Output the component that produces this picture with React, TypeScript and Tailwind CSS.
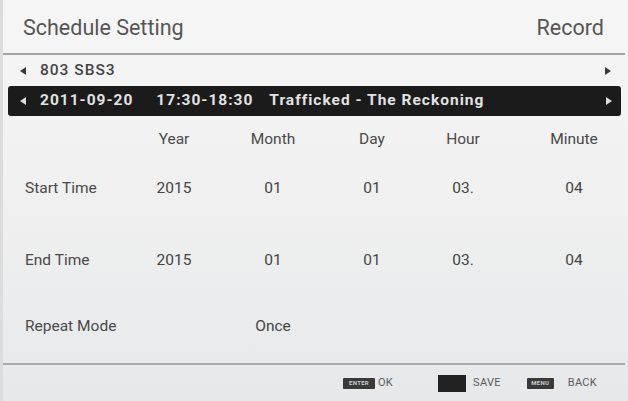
import React from 'react'

// ─── Small pieces ─────────────────────────────────────────────────────────────

function TriLeft({ className = '' }: { className?: string }) {
  return (
    <svg width="6" height="8" viewBox="0 0 6 8" className={className}>
      <path d="M6 0 L0 4 L6 8 Z" fill="currentColor" />
    </svg>
  )
}

function TriRight({ className = '' }: { className?: string }) {
  return (
    <svg width="6" height="8" viewBox="0 0 6 8" className={className}>
      <path d="M0 0 L6 4 L0 8 Z" fill="currentColor" />
    </svg>
  )
}

const cols = ['Year', 'Month', 'Day', 'Hour', 'Minute']

const gridCls = 'grid grid-cols-[104px_90px_108px_90px_92px_110px] pl-[22px] items-center'

function ValueRow({ label, values, h }: { label: string; values: string[]; h: string }) {
  return (
    <div className={`${gridCls} ${h}`}>
      <span className="text-[15.5px] text-[#4a4a4a]">{label}</span>
      {values.map((v, i) => (
        <span
          key={i}
          className={`text-center text-[15.5px] text-[#444] ${i === 4 ? 'pl-[20px]' : ''}`}
        >
          {v}
        </span>
      ))}
    </div>
  )
}

// ─── Page ─────────────────────────────────────────────────────────────────────

export default function App() {
  return (
    <div
      className="w-[628px] h-[401px] overflow-hidden flex flex-col bg-gradient-to-b from-[#f6f6f6] via-[#f0f0f0] to-[#e6e8ea] border-l-[3px] border-[#dcdcdc]"
      style={{ fontFamily: 'Roboto, "Noto Sans", sans-serif' }}
    >
      {/* Header */}
      <div className="h-[53px] flex items-center justify-between pl-[20px] pr-[24px] pt-[3px]">
        <span className="text-[21.5px] text-[#555]">Schedule Setting</span>
        <span className="text-[21.5px] text-[#555]">Record</span>
      </div>
      <div className="h-[2px] mr-[3px] bg-[#a3a3a3]" />

      {/* Channel */}
      <div className="h-[31px] flex items-center pl-[17px] pr-[17px] text-[#3a3a3a]">
        <TriLeft />
        <span className="ml-[14px] text-[15.5px] font-medium tracking-[1px] text-[#444]">803 SBS3</span>
        <TriRight className="ml-auto" />
      </div>

      {/* Selected programme */}
      <div className="h-[30px] ml-[5px] mr-[7px] rounded-[3px] bg-[#1b1b1b] flex items-center pl-[12px] pr-[9px] text-[#e2e2e2]">
        <TriLeft className="text-[#ddd]" />
        <div className="ml-[14px] flex items-center text-[15.5px] font-bold tracking-[1px]">
          <span>2011-09-20</span>
          <span className="ml-[23px]">17:30-18:30</span>
          <span className="ml-[16px]">Trafficked - The Reckoning</span>
        </div>
        <TriRight className="ml-auto text-[#ddd]" />
      </div>

      {/* Time table */}
      <div className={`${gridCls} h-[44px] pt-[4px]`}>
        <span />
        {cols.map((c, i) => (
          <span key={c} className={`text-center text-[15.5px] text-[#4a4a4a] ${i === 4 ? 'pl-[20px]' : ''}`}>
            {c}
          </span>
        ))}
      </div>
      <ValueRow label="Start Time" values={['2015', '01', '01', '03.', '04']} h="h-[58px]" />
      <ValueRow label="End Time" values={['2015', '01', '01', '03.', '04']} h="h-[86px]" />
      <div className={`${gridCls} h-[46px]`}>
        <span className="text-[15.5px] text-[#4a4a4a]">Repeat Mode</span>
        <span />
        <span className="text-center text-[15.5px] text-[#444]">Once</span>
      </div>

      <div className="flex-1" />
      <div className="h-[2px] mr-[3px] bg-[#a8aaac]" />

      {/* Footer */}
      <div className="h-[36px] flex items-center text-[11px] text-[#5a5a5a] tracking-[0.3px]">
        <span className="ml-[340px] w-[32px] h-[11px] bg-[#3a3a3a] rounded-[1px] flex items-center justify-center text-[6px] leading-none text-[#ccc] font-bold">
          ENTER
        </span>
        <span className="ml-[3px]">OK</span>
        <span className="ml-[45px] w-[28px] h-[17px] bg-[#222]" />
        <span className="ml-[7px]">SAVE</span>
        <span className="ml-[26px] w-[27px] h-[11px] bg-[#3a3a3a] rounded-[1px] flex items-center justify-center text-[6px] leading-none text-[#ccc] font-bold">
          MENU
        </span>
        <span className="ml-[14px]">BACK</span>
      </div>
    </div>
  )
}
